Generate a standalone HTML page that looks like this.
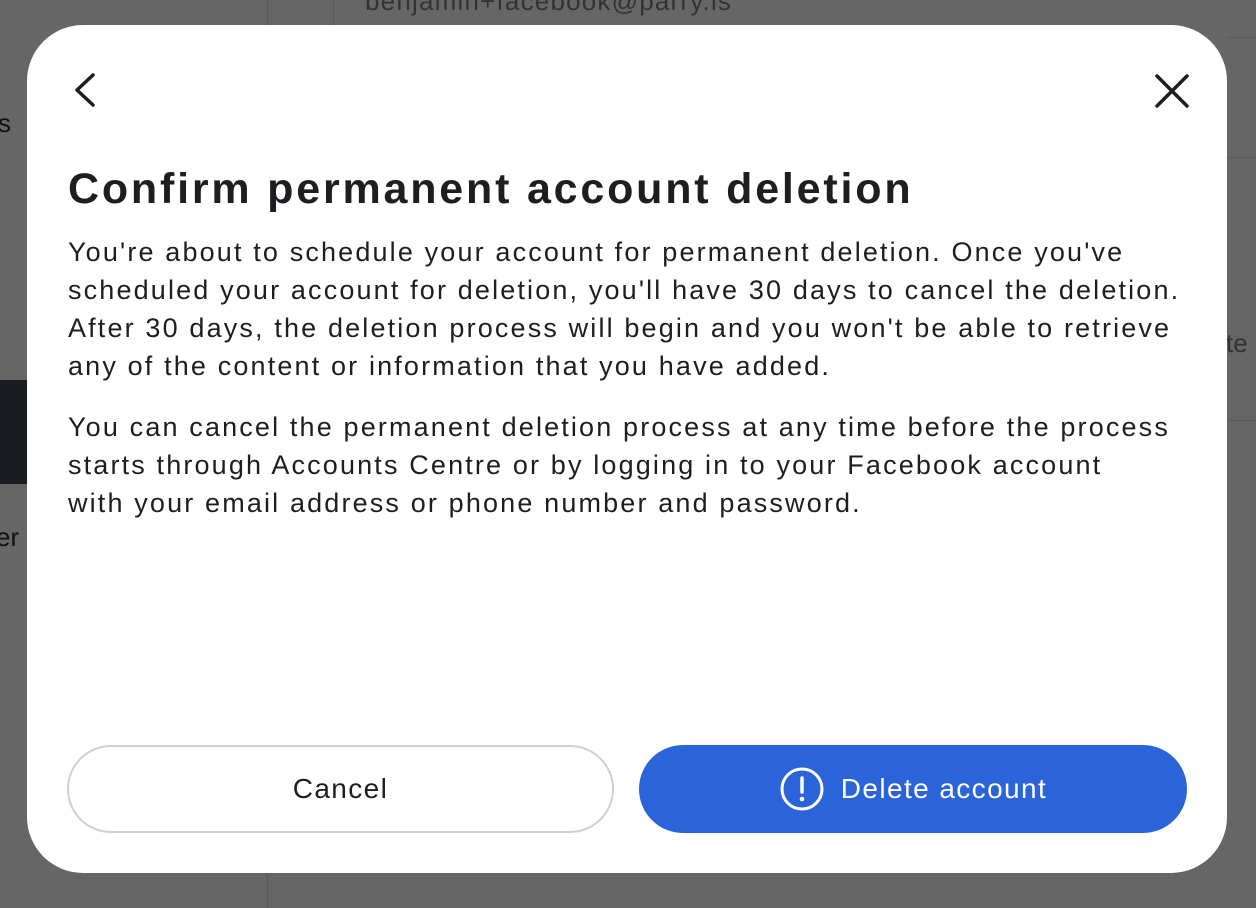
<!DOCTYPE html>
<html><head><meta charset="utf-8"><style>
html,body{margin:0;padding:0;width:1256px;height:908px;overflow:hidden;background:#666;font-family:"Liberation Sans",sans-serif;}
.bg{position:absolute;}
.modal{position:absolute;left:27px;top:25px;width:1200px;height:848px;background:#fff;border-radius:56px;}
h1{position:absolute;left:41px;top:140px;margin:0;font-size:43px;font-weight:bold;color:#1c1e21;white-space:nowrap;letter-spacing:2.8px}
.p{position:absolute;left:41px;font-size:27px;line-height:38px;color:#1c1e21;white-space:nowrap;letter-spacing:2.15px}
.btn{position:absolute;top:720px;height:88px;border-radius:44px;box-sizing:border-box;font-size:28px;letter-spacing:1.4px;display:flex;align-items:center;justify-content:center;}
</style></head><body>
<div class="bg" style="left:267px;top:0;width:1px;height:908px;background:#5a5a5a"></div>
<div class="bg" style="left:333px;top:0;width:1px;height:30px;background:#5a5a5a"></div>
<div class="bg" style="left:0;top:380px;width:30px;height:104px;background:#1a1d21"></div>
<div class="bg" style="left:1227px;top:37px;width:29px;height:1px;background:#5a5a5a"></div>
<div class="bg" style="left:1227px;top:157px;width:29px;height:1px;background:#5a5a5a"></div>
<div class="bg" style="left:1227px;top:420px;width:29px;height:1px;background:#5a5a5a"></div>
<div class="bg" style="left:-2px;top:108px;font-size:26px;color:#111">s</div>
<div class="bg" style="left:-4px;top:522px;font-size:26px;color:#111">er</div>
<div class="bg" style="left:1226px;top:328px;font-size:26px;color:#333">te</div>
<div class="bg" style="left:365px;top:-14px;font-size:26px;color:#333;letter-spacing:1.2px">benjamin+facebook@parry.is</div>
<div class="modal">
<svg style="position:absolute;left:44px;top:48px" width="30" height="34" viewBox="0 0 30 34"><path d="M22 2 L6 17 L22 32" fill="none" stroke="#1c1e21" stroke-width="3.5" stroke-linecap="round" stroke-linejoin="round"/></svg>
<svg style="position:absolute;left:1127px;top:48px" width="36" height="36" viewBox="0 0 36 36"><path d="M3 3 L33 33 M33 3 L3 33" fill="none" stroke="#1c1e21" stroke-width="3.5" stroke-linecap="round"/></svg>
<h1>Confirm permanent account deletion</h1>
<div class="p" style="top:208px">You're about to schedule your account for permanent deletion. Once you've<br>scheduled your account for deletion, you'll have 30 days to cancel the deletion.<br>After 30 days, the deletion process will begin and you won't be able to retrieve<br>any of the content or information that you have added.</div>
<div class="p" style="top:383px">You can cancel the permanent deletion process at any time before the process<br>starts through Accounts Centre or by logging in to your Facebook account<br>with your email address or phone number and password.</div>
<div class="btn" style="left:40px;width:547px;border:2px solid #ccd0d5;color:#1c1e21">Cancel</div>
<div class="btn" style="left:612px;width:548px;background:#2b63d9;color:#fff">
<svg width="46" height="46" viewBox="0 0 46 46" style="margin-right:16px"><circle cx="23" cy="23" r="20" fill="none" stroke="#fff" stroke-width="3"/><path d="M23 12 V26" stroke="#fff" stroke-width="3.5" stroke-linecap="round"/><circle cx="23" cy="33" r="2.3" fill="#fff"/></svg>Delete account</div>
</div>
</body></html>
